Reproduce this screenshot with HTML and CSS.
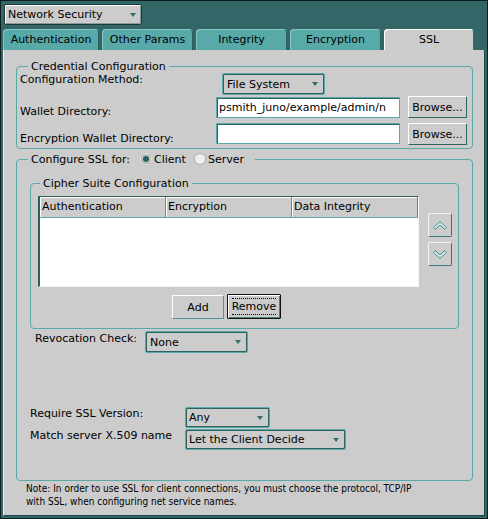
FILE: index.html
```html
<!DOCTYPE html>
<html>
<head>
<meta charset="utf-8">
<link rel="stylesheet" href="styles.css">
</head>
<body>
<div class="window">
  <div class="select top-select"><span>Network Security</span><span class="arrow"></span></div>
  <div class="tabs">
    <div class="tab t-auth">Authentication</div>
    <div class="tab">Other Params</div>
    <div class="tab">Integrity</div>
    <div class="tab">Encryption</div>
    <div class="tab tab-active">SSL</div>
  </div>
  <div class="panel">
    <fieldset class="group cred">
      <legend>Credential Configuration</legend>
      <div class="cred-grid">
        <div class="lbl">Configuration Method:</div>
        <div class="select method"><span>File System</span><span class="arrow"></span></div>
        <div class="lbl lbl-end">Wallet Directory:</div>
        <div class="input">psmith_juno/example/admin/n</div>
        <div class="btn browse">Browse...</div>
        <div class="lbl lbl-end">Encryption Wallet Directory:</div>
        <div class="input input-last"></div>
        <div class="btn browse browse-last">Browse...</div>
      </div>
    </fieldset>

    <fieldset class="group ssl">
      <legend><span class="legend-text">Configure SSL for:</span><span class="radio radio-on"></span><span class="radio-label">Client</span><span class="radio"></span><span class="radio-label">Server</span></legend>

      <fieldset class="group cipher">
        <legend>Cipher Suite Configuration</legend>
        <div class="cipher-body">
          <div class="table-col">
            <div class="table">
              <div class="thead">
                <div class="th">Authentication</div>
                <div class="th">Encryption</div>
                <div class="th">Data Integrity</div>
              </div>
              <div class="tbody"></div>
            </div>
            <div class="btn-row">
              <div class="btn btn-add">Add</div>
              <div class="btn btn-remove"><span class="focus">Remove</span></div>
            </div>
          </div>
          <div class="move-col">
            <div class="btn sq">
              <svg width="14" height="9" viewBox="0 0 14 9"><path d="M0.5 6.5 L7 0.8 L13.5 6.5 L11.8 8.3 L7 4.2 L2.2 8.3 Z" fill="#d9eeee" stroke="#3d8b8b" stroke-width="1"/></svg>
            </div>
            <div class="btn sq">
              <svg width="14" height="9" viewBox="0 0 14 9"><path d="M0.5 2.5 L7 8.2 L13.5 2.5 L11.8 0.7 L7 4.8 L2.2 0.7 Z" fill="#d9eeee" stroke="#3d8b8b" stroke-width="1"/></svg>
            </div>
          </div>
        </div>
      </fieldset>

      <div class="revoc-row">
        <div class="lbl revoc-lbl">Revocation Check:</div>
        <div class="select revoc"><span>None</span><span class="arrow"></span></div>
      </div>

      <div class="opts">
        <div class="lbl">Require SSL Version:</div>
        <div class="select ver"><span>Any</span><span class="arrow"></span></div>
        <div class="lbl">Match server X.509 name</div>
        <div class="select match"><span>Let the Client Decide</span><span class="arrow"></span></div>
      </div>
    </fieldset>

    <p class="note">Note: In order to use SSL for client connections, you must choose the protocol, TCP/IP<br>with SSL, when configuring net service names.</p>
  </div>
</div>
</body>
</html>
```

FILE: styles.css
```css
* { box-sizing: border-box; }
html, body { margin: 0; padding: 0; }
body {
  font-family: "DejaVu Sans", "Liberation Sans", sans-serif;
  font-size: 11px;
  line-height: 13px;
  color: #000;
  background: #336666;
}
.window {
  width: 488px;
  height: 519px;
  border: 1px solid #0c1e1e;
  background: #336666;
  padding: 3px 2px 2px 2px;
  display: flex;
  flex-direction: column;
}

/* dropdowns */
.select {
  display: flex;
  align-items: center;
  justify-content: space-between;
  background: #cccccc;
  border: 1px solid #5aa8a8;
  border-radius: 2px;
  box-shadow: inset 1px 1px 0 #2c6262, inset -1px -1px 0 #2c6262;
  padding: 0 6px 0 4px;
  height: 22px;
}
.arrow {
  width: 0;
  height: 0;
  border-left: 3.5px solid transparent;
  border-right: 3.5px solid transparent;
  border-top: 4px solid #2f6f6f;
}
.top-select {
  margin-left: 1px;
  width: 138px;
  height: 21px;
  border: 1px solid #183c3c;
  box-shadow: inset 1px 1px 0 #ffffff, inset -1px -1px 0 #8a9a9a;
  padding: 0 5px 0 3px;
}

/* tabs */
.tabs {
  display: flex;
  gap: 3px;
  margin-top: 4px;
  height: 21px;
}
.tab {
  width: 91px;
  height: 21px;
  background: #58aaa8;
  border-radius: 4px 4px 0 0;
  box-shadow: inset 1px 1px 0 #86c6c4, inset -1px 0 0 #2c5c5c;
  text-align: center;
  line-height: 21px;
}
.t-auth { width: 96px; }
.tab-active {
  width: 90px;
  background: #cccccc;
  box-shadow: inset 1px 1px 0 #ffffff, inset -1px 0 0 #3a6a6a;
}

/* panel */
.panel {
  flex: 1;
  background: #cccccc;
  border-left: 1px solid #eeeeee;
  border-right: 1px solid #1c4444;
  border-bottom: 1px solid #1c4444;
  padding-top: 10px;
}

.group {
  border: 1px solid #5aa8a8;
  border-radius: 4px;
  margin: 0;
  padding: 0 3px 3px 3px;
  min-width: 0;
}
.group > legend {
  padding: 0 3px;
  line-height: 13px;
  margin-left: 8px;
}

.cred { margin: 0 11px 0 12px; }
.cred-grid {
  display: grid;
  grid-template-columns: 188px 184px 59px;
  grid-template-rows: 23px 22px 27px;
  column-gap: 8px;
}
.lbl { white-space: nowrap; }
.lbl-end { align-self: end; }
.method {
  grid-column: 2 / 4;
  justify-self: start;
  margin-left: 6px;
  width: 103px;
}
.input {
  align-self: end;
  height: 21px;
  background: #ffffff;
  border: 1px solid #5aa8a8;
  box-shadow: inset 1px 1px 0 #2c6262;
  padding: 0 2px;
  line-height: 19px;
  white-space: nowrap;
  overflow: hidden;
}
.input-last { margin-bottom: 1px; }

.btn {
  background: #cccccc;
  border: 1px solid;
  border-color: #ffffff #2f6464 #2f6464 #ffffff;
  border-radius: 1px;
  display: flex;
  align-items: center;
  justify-content: center;
}
.browse { height: 22px; }
.browse-last { align-self: end; }

/* ssl group */
.ssl {
  margin: 4px 11px 0 12px;
  padding: 11px 3px 30px 3px;
}
.legend-text { margin-right: 10px; }
.radio {
  display: inline-block;
  width: 12px;
  height: 12px;
  border-radius: 50%;
  background: #efefef;
  border: 1px solid #a8b4b4;
  vertical-align: -2px;
  margin-right: 2px;
}
.radio-on {
  background: #2d6060;
  border: 1px solid #eeeeee;
  box-shadow: inset 0 0 0 2px #b9c9c9;
}
.radio-label { margin-right: 8px; }

.cipher {
  margin: 0 10px 0 10px;
  padding: 6px 5px 9px 7px;
}
.cipher > legend { margin-left: 2px; }
.cipher-body {
  display: flex;
  gap: 9px;
}
.table-col { width: 381px; }
.table {
  height: 91px;
  display: flex;
  flex-direction: column;
  background: #ffffff;
  border-top: 1px solid #2b5e5e;
  border-left: 2px solid #2b5e5e;
  border-right: 1px solid #f4f4f4;
  border-bottom: 1px solid #f4f4f4;
}
.thead {
  display: flex;
  height: 21px;
  background: #cccccc;
  border-bottom: 1px solid #5aa8a8;
}
.th {
  width: 126px;
  border-right: 1px solid #4a9a9a;
  box-shadow: inset 1px 1px 0 #ffffff;
  padding-left: 2px;
  line-height: 20px;
}
.tbody { flex: 1; }

.btn-row {
  display: flex;
  justify-content: center;
  gap: 3px;
  margin-top: 8px;
  padding-right: 4px;
}
.btn-add {
  width: 52px;
  height: 24px;
  border-color: #ffffff #4a9898 #4a9898 #ffffff;
}
.btn-remove {
  width: 54px;
  height: 25px;
  margin-top: -1px;
  border: 1px solid #111;
  box-shadow: inset 1px 1px 0 #ffffff, inset -1px -1px 0 #4a8080;
}
.focus {
  border-top: 1px dotted #000;
  border-bottom: 1px dotted #000;
  padding: 1px 0;
  line-height: 13px;
}

.move-col {
  display: flex;
  flex-direction: column;
  gap: 5px;
  margin-top: 17px;
}
.sq {
  width: 24px;
  height: 24px;
  border-radius: 2px;
  border-color: #f4f4f4 #3a7878 #3a7878 #f4f4f4;
}

.revoc-row {
  display: flex;
  align-items: flex-start;
  margin-top: 2px;
  padding-left: 15px;
}
.revoc-lbl { width: 110px; padding-top: 1px; }
.revoc { width: 103px; }

.opts {
  display: grid;
  grid-template-columns: 155px auto;
  grid-auto-rows: 21px;
  row-gap: 1px;
  margin-top: 54px;
  margin-left: 10px;
  justify-items: start;
}
.opts .select { height: 21px; padding-left: 3px; }
.ver { width: 85px; }
.match { width: 161px; }

.note {
  margin: 1px 0 0 22px;
  font-family: "DejaVu Sans Condensed", "DejaVu Sans", sans-serif;
  font-stretch: condensed;
  font-size: 10px;
  line-height: 13px;
}
```
